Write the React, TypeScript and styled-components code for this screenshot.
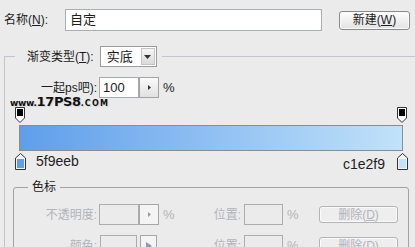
import styled, { createGlobalStyle } from "styled-components";

const GlobalStyle = createGlobalStyle`
  html, body {
    margin: 0;
    padding: 0;
    background: #ebebeb;
  }
  body {
    font-family: "Liberation Sans", "Noto Sans CJK SC", sans-serif;
  }
  * {
    box-sizing: border-box;
  }
`;

const DISABLED = "#b3b3bb";

const Dialog = styled.div`
  width: 415px;
  height: 247px;
  overflow: hidden;
  background: #ebebeb;
  color: #1c1c1c;
  font-size: 12px;
  line-height: 14px;
`;

const Key = styled.span`
  text-decoration: underline;
`;

const NameRow = styled.div`
  display: flex;
  align-items: center;
  padding: 9px 0 0 4px;
`;

const NameLabel = styled.label`
  width: 61px;
`;

const NameInput = styled.div`
  width: 257px;
  height: 22px;
  border: 1px solid #a9aeb5;
  background: #fff;
  padding: 0 0 0 4px;
  font-size: 13px;
  line-height: 20px;
`;

const PushButton = styled.div<{ $disabled?: boolean; $w: number; $ml: number }>`
  width: ${(p) => p.$w}px;
  height: ${(p) => (p.$disabled ? 17 : 19)}px;
  margin-left: ${(p) => p.$ml}px;
  border: 1px solid ${(p) => (p.$disabled ? "#b4b4b8" : "#8a8a8a")};
  border-radius: 3px;
  background: ${(p) =>
    p.$disabled ? "#eeeeee" : "linear-gradient(#fdfdfd, #e3e3e3)"};
  box-shadow: inset 0 0 0 1px #fafafa;
  color: ${(p) => (p.$disabled ? DISABLED : "#1c1c1c")};
  display: flex;
  align-items: center;
  justify-content: center;
  font-size: 12px;
`;

const GradientGroup = styled.fieldset`
  margin: 15px 0 0 4px;
  padding: 0;
  width: 440px;
  min-width: 0;
  border: 1px solid #c4c3ce;
  border-right: none;
  border-bottom: none;
`;

const GroupLegend = styled.legend`
  display: flex;
  align-items: center;
  margin-left: 10px;
  padding: 0 5px 0 12px;
`;

const Select = styled.div`
  display: flex;
  width: 57px;
  height: 21px;
  margin-left: 6px;
  border: 1px solid #9c9c9c;
  background: #fff;
`;

const SelectValue = styled.span`
  flex: 1;
  padding-left: 6px;
  font-size: 13px;
  line-height: 19px;
`;

const SelectArrow = styled.span`
  width: 14px;
  margin: 1px;
  border: 1px solid #c4c4c4;
  background: linear-gradient(#f6f6f6, #dadada);
  display: flex;
  align-items: center;
  justify-content: center;
`;

const Row = styled.div<{ $mt: number }>`
  display: flex;
  align-items: center;
  height: 21px;
  margin-top: ${(p) => p.$mt}px;
`;

const FieldLabel = styled.span<{ $w: number; $disabled?: boolean }>`
  width: ${(p) => p.$w}px;
  text-align: right;
  white-space: nowrap;
  color: ${(p) => (p.$disabled ? DISABLED : "#1c1c1c")};
`;

const Field = styled.div<{ $w: number; $ml: number; $disabled?: boolean }>`
  width: ${(p) => p.$w}px;
  height: 21px;
  margin-left: ${(p) => p.$ml}px;
  border: 1px solid ${(p) => (p.$disabled ? "#acacac" : "#a5a9b0")};
  background: ${(p) => (p.$disabled ? "transparent" : "#fff")};
  padding-left: 3px;
  font-size: 13px;
  line-height: 19px;
`;

const StepButton = styled.div<{ $w: number; $ml?: number; $disabled?: boolean }>`
  width: ${(p) => p.$w}px;
  height: 21px;
  margin-left: ${(p) => p.$ml ?? 0}px;
  border: 1px solid ${(p) => (p.$disabled ? "#a6a6a6" : "#a3a3a3")};
  background: ${(p) =>
    p.$disabled ? "#f4f4f4" : "linear-gradient(#fbfbfb, #e0e0e0)"};
  display: flex;
  align-items: center;
  justify-content: center;
`;

const Percent = styled.span<{ $disabled?: boolean }>`
  width: 13px;
  margin-left: 4px;
  font-size: 13px;
  color: ${(p) => (p.$disabled ? DISABLED : "#1c1c1c")};
`;

const StopTrack = styled.div<{ $mt: number; $w: number }>`
  position: relative;
  display: flex;
  justify-content: space-between;
  align-items: flex-start;
  width: ${(p) => p.$w}px;
  height: 17px;
  margin: ${(p) => p.$mt}px 0 0 10px;
`;

const Watermark = styled.span`
  position: absolute;
  left: -5px;
  top: -11px;
  font-family: "DejaVu Sans", sans-serif;
  font-weight: bold;
  color: #111;
  white-space: nowrap;
  text-shadow: 1px 1px 0 #d8d8d8;
  line-height: 12px;
`;

const WmSmall = styled.span`
  font-size: 9px;
  letter-spacing: -0.3px;
`;

const WmBig = styled.span`
  font-size: 13px;
  letter-spacing: -0.4px;
`;

const WmTail = styled.span`
  font-size: 8px;
  letter-spacing: 1.2px;
`;

const GradientBar = styled.div`
  width: 384px;
  height: 26px;
  margin: 1px 0 0 14px;
  border: 1px solid #8d8d8d;
  background: linear-gradient(to right, #5f9eeb, #c1e2f9);
`;

const StopCode = styled.span<{ $mt: number; $ml?: number; $mr?: number }>`
  margin-top: ${(p) => p.$mt}px;
  margin-left: ${(p) => p.$ml ?? 0}px;
  margin-right: ${(p) => p.$mr ?? 0}px;
  font-size: 14px;
  line-height: 16px;
  color: #1e1e1e;
`;

const Spacer = styled.span`
  flex: 1;
`;

const StopGroup = styled.fieldset`
  margin: 8px 0 0 8px;
  padding: 8px 0 20px 0;
  width: 396px;
  min-width: 0;
  border: 1px solid #a2a2a2;
  border-radius: 3px;
`;

const StopLegend = styled.legend`
  margin-left: 14px;
  padding: 0 4px;
  line-height: 18px;
`;

const TriRight = ({ color, big }: { color: string; big?: boolean }) =>
  big ? (
    <svg width="6" height="8" viewBox="0 0 6 8">
      <path d="M0 0 L6 4 L0 8 Z" fill={color} />
    </svg>
  ) : (
    <svg width="3" height="5" viewBox="0 0 3 5">
      <path d="M0 0 L3 2.5 L0 5 Z" fill={color} />
    </svg>
  );

const TriDown = () => (
  <svg width="7" height="4" viewBox="0 0 7 4">
    <path d="M0 0 H7 L3.5 4 Z" fill="#333" />
  </svg>
);

const OpacityStop = () => (
  <svg width="10" height="16" viewBox="0 0 10 16">
    <path d="M0.5 0.5 H9.5 V11 L5 15.5 L0.5 11 Z" fill="#fff" stroke="#333" />
    <rect x="2" y="2" width="6" height="7" fill="#000" />
  </svg>
);

const ColorStop = ({ color }: { color: string }) => (
  <svg width="11" height="17" viewBox="0 0 11 17">
    <path d="M5.5 0.5 L10.5 5 V16.5 H0.5 V5 Z" fill="#f4f4f4" stroke="#333" />
    <rect x="2" y="6" width="7" height="9" fill={color} />
  </svg>
);

export default function App() {
  return (
    <Dialog>
      <GlobalStyle />
      <NameRow>
        <NameLabel>
          名称(<Key>N</Key>):
        </NameLabel>
        <NameInput>自定</NameInput>
        <PushButton $w={71} $ml={17}>
          新建(<Key>W</Key>)
        </PushButton>
      </NameRow>

      <GradientGroup>
        <GroupLegend>
          <span>
            渐变类型(<Key>T</Key>):
          </span>
          <Select>
            <SelectValue>实底</SelectValue>
            <SelectArrow>
              <TriDown />
            </SelectArrow>
          </Select>
        </GroupLegend>

        <Row $mt={10}>
          <FieldLabel $w={92}>一起ps吧):</FieldLabel>
          <Field $w={40} $ml={2}>
            100
          </Field>
          <StepButton $w={20}>
            <TriRight color="#333" />
          </StepButton>
          <Percent>%</Percent>
        </Row>

        <StopTrack $mt={9} $w={392}>
          <Watermark>
            <WmSmall>www.</WmSmall>
            <WmBig>17PS8</WmBig>
            <WmTail>.COM</WmTail>
          </Watermark>
          <OpacityStop />
          <OpacityStop />
        </StopTrack>

        <GradientBar />

        <StopTrack $mt={2} $w={393}>
          <ColorStop color="#5f9eeb" />
          <StopCode $mt={0} $ml={10}>
            5f9eeb
          </StopCode>
          <Spacer />
          <StopCode $mt={3} $mr={12}>
            c1e2f9
          </StopCode>
          <ColorStop color="#c1e2f9" />
        </StopTrack>

        <StopGroup>
          <StopLegend>色标</StopLegend>
          <Row $mt={0}>
            <FieldLabel $w={83} $disabled>
              不透明度:
            </FieldLabel>
            <Field $w={40} $ml={2} $disabled />
            <StepButton $w={20} $disabled>
              <TriRight color="#9a9a9a" />
            </StepButton>
            <Percent $disabled>%</Percent>
            <FieldLabel $w={65} $disabled>
              位置:
            </FieldLabel>
            <Field $w={39} $ml={3} $disabled />
            <Percent $disabled>%</Percent>
            <PushButton $w={79} $ml={19} $disabled>
              删除(<Key>D</Key>)
            </PushButton>
          </Row>
          <Row $mt={10}>
            <FieldLabel $w={83} $disabled>
              颜色:
            </FieldLabel>
            <Field $w={37} $ml={3} $disabled />
            <StepButton $w={17} $ml={3} $disabled>
              <TriRight color="#8e9ab0" big />
            </StepButton>
            <FieldLabel $w={84} $disabled>
              位置:
            </FieldLabel>
            <Field $w={39} $ml={3} $disabled />
            <Percent $disabled>%</Percent>
            <PushButton $w={79} $ml={19} $disabled>
              删除(<Key>D</Key>)
            </PushButton>
          </Row>
        </StopGroup>
      </GradientGroup>
    </Dialog>
  );
}
